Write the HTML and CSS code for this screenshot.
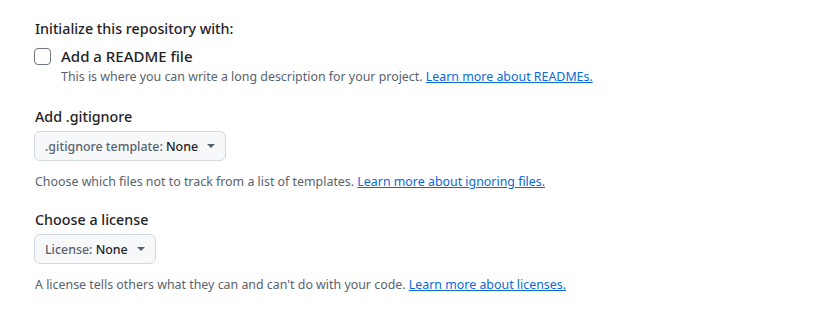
FILE: index.html
```html
<!DOCTYPE html>
<html>
<head>
<meta charset="utf-8">
<link rel="stylesheet" href="styles.css">
</head>
<body>
<div class="page">
  <section class="init">
    <h3 class="section-title">Initialize this repository with:</h3>
    <div class="check-row">
      <span class="checkbox"></span>
      <div class="check-body">
        <div class="check-label">Add a README file</div>
        <p class="note">This is where you can write a long description for your project. <a href="#">Learn more about READMEs.</a></p>
      </div>
    </div>
  </section>

  <section class="group">
    <h3 class="section-title">Add .gitignore</h3>
    <button class="select-btn"><span class="label"><span class="muted">.gitignore template: </span><span class="val">None</span></span><span class="caret"></span></button>
    <p class="note">Choose which files not to track from a list of templates. <a href="#">Learn more about ignoring files.</a></p>
  </section>

  <section class="group group-license">
    <h3 class="section-title">Choose a license</h3>
    <button class="select-btn"><span class="label"><span class="muted">License: </span><span class="val">None</span></span><span class="caret"></span></button>
    <p class="note">A license tells others what they can and can't do with your code. <a href="#">Learn more about licenses.</a></p>
  </section>
</div>
</body>
</html>
```

FILE: styles.css
```css
* { box-sizing: border-box; }
html, body { margin: 0; background: #ffffff; }
body {
  font-family: "Noto Sans", "Open Sans", sans-serif;
  color: #1f2328;
}
.page {
  padding: 18px 0 0 35px;
}
.section-title {
  margin: 0;
  font-size: 14.3px;
  font-weight: 500;
  line-height: 22px;
  color: #1f2328;
}
.check-row {
  display: flex;
  gap: 10px;
  margin-top: 5px;
  margin-left: -1px;
}
.checkbox {
  width: 17px;
  height: 17px;
  border: 1px solid #6e7781;
  border-radius: 4px;
  margin-top: 3px;
  flex: none;
}
.check-label {
  font-size: 15px;
  font-weight: 500;
  line-height: 22px;
}
.note {
  margin: 0;
  font-size: 12.4px;
  line-height: 18px;
  color: #59636e;
}
.check-body .note { margin-top: 1px; }
.note a { color: #0969da; text-decoration: underline; }
.group { margin-top: 20px; }
.group-license { margin-top: 18px; }
.select-btn {
  display: flex;
  align-items: center;
  height: 30px;
  margin-top: 3px;
  margin-left: -1px;
  padding: 0 10px 0 10px;
  border: 1px solid #d1d9e0;
  border-radius: 6px;
  background: #f6f8fa;
  font-family: inherit;
  font-size: 12.4px;
  font-weight: 500;
  color: #1f2328;
}
.select-btn .label { white-space: pre; }
.select-btn .muted { color: #59636e; }
.select-btn .val { color: #1f2328; }
.caret {
  width: 0; height: 0;
  border-left: 4px solid transparent;
  border-right: 4px solid transparent;
  border-top: 4px solid #59636e;
  margin-left: 9px;
}
.group .note { margin-top: 12px; }
```
